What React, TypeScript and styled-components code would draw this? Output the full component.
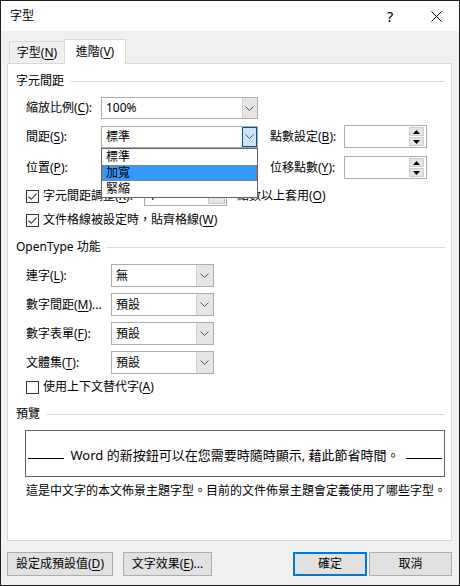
import React from 'react';
import styled, { createGlobalStyle } from 'styled-components';

const GlobalStyle = createGlobalStyle`
  html, body {
    margin: 0;
    padding: 0;
    background: #fff;
  }
  body {
    font-family: "Noto Sans", "Noto Sans CJK TC", sans-serif;
    font-size: 12px;
    line-height: 16px;
    color: #000;
  }
  * {
    box-sizing: border-box;
  }
  u {
    text-underline-offset: 2px;
  }
`;

const Chevron = () => (
  <svg width="9" height="5" viewBox="0 0 9 5">
    <path d="M0.5 0.5 L4.5 4.5 L8.5 0.5" stroke="#555" fill="none" />
  </svg>
);

const Tri = ({ up }: { up?: boolean }) => (
  <svg width="7" height="4" viewBox="0 0 7 4">
    <path d={up ? 'M0 4 L3.5 0 L7 4 Z' : 'M0 0 L3.5 4 L7 0 Z'} fill="#000" />
  </svg>
);

const Tick = () => (
  <svg width="11" height="11" viewBox="0 0 11 11">
    <path d="M1.5 5.5 L4.2 8.3 L9.6 2.6" fill="none" stroke="#333" strokeWidth="1.1" />
  </svg>
);

const CloseIcon = () => (
  <svg width="11" height="11" viewBox="0 0 11 11">
    <path d="M0.5 0.5 L10.5 10.5 M10.5 0.5 L0.5 10.5" stroke="#000" strokeWidth="1" />
  </svg>
);

export default function App() {
  return (
    <>
      <GlobalStyle />
      <Window>
        <TitleBar>
          <Title>字型</Title>
          <TitleButton>
            <HelpMark>?</HelpMark>
          </TitleButton>
          <TitleButton>
            <CloseIcon />
          </TitleButton>
        </TitleBar>

        <Body>
          <TabStrip>
            <Tab $w={56}>
              字型(<u>N</u>)
            </Tab>
            <Tab $active $w={62}>
              進階(<u>V</u>)
            </Tab>
          </TabStrip>

          <Panel>
            <SectionHeading $mt={9}>
              <span>字元間距</span>
              <Line />
            </SectionHeading>

            <Row $mt={8}>
              <Label $w={75}>
                縮放比例(<u>C</u>):
              </Label>
              <Combo $w={157} $h={22}>
                <ComboValue>100%</ComboValue>
                <ComboArrow>
                  <Chevron />
                </ComboArrow>
              </Combo>
            </Row>

            <Row $mt={6}>
              <Label $w={75}>
                間距(<u>S</u>):
              </Label>
              <Combo $w={157} $h={22}>
                <ComboValue>標準</ComboValue>
                <ComboArrow $active>
                  <Chevron />
                </ComboArrow>
                <DropList>
                  <DropItem>標準</DropItem>
                  <DropItem $selected>加寬</DropItem>
                  <DropItem>緊縮</DropItem>
                </DropList>
              </Combo>
              <Label $w={74} $ml={12}>
                點數設定(<u>B</u>):
              </Label>
              <Spin>
                <SpinField />
                <SpinButtons>
                  <SpinButton>
                    <Tri up />
                  </SpinButton>
                  <SpinButton>
                    <Tri />
                  </SpinButton>
                </SpinButtons>
              </Spin>
            </Row>

            <Row $mt={8}>
              <Label $w={75}>
                位置(<u>P</u>):
              </Label>
              <Combo $w={157} $h={22}>
                <ComboValue />
                <ComboArrow>
                  <Chevron />
                </ComboArrow>
              </Combo>
              <Label $w={74} $ml={12}>
                位移點數(<u>Y</u>):
              </Label>
              <Spin>
                <SpinField />
                <SpinButtons>
                  <SpinButton>
                    <Tri up />
                  </SpinButton>
                  <SpinButton>
                    <Tri />
                  </SpinButton>
                </SpinButtons>
              </Spin>
            </Row>

            <Row $mt={7}>
              <Box>
                <Tick />
              </Box>
              <CheckText $w={101}>
                字元間距調整(<u>K</u>):
              </CheckText>
              <Combo $w={83} $h={20}>
                <ComboValue>1</ComboValue>
                <SmallArrow>
                  <Tri />
                </SmallArrow>
              </Combo>
              <CheckText $ml={10}>
                點數以上套用(<u>O</u>)
              </CheckText>
            </Row>

            <Row $mt={4}>
              <Box>
                <Tick />
              </Box>
              <CheckText>
                文件格線被設定時，貼齊格線(<u>W</u>)
              </CheckText>
            </Row>

            <SectionHeading $mt={9}>
              <span>OpenType 功能</span>
              <Line />
            </SectionHeading>

            <Row $mt={9}>
              <Label $w={85}>
                連字(<u>L</u>):
              </Label>
              <Combo $w={103} $h={23}>
                <ComboValue>無</ComboValue>
                <ComboArrow $wide>
                  <Chevron />
                </ComboArrow>
              </Combo>
            </Row>
            <Row $mt={6}>
              <Label $w={85}>
                數字間距(<u>M</u>)...
              </Label>
              <Combo $w={103} $h={23}>
                <ComboValue>預設</ComboValue>
                <ComboArrow $wide>
                  <Chevron />
                </ComboArrow>
              </Combo>
            </Row>
            <Row $mt={6}>
              <Label $w={85}>
                數字表單(<u>F</u>):
              </Label>
              <Combo $w={103} $h={23}>
                <ComboValue>預設</ComboValue>
                <ComboArrow $wide>
                  <Chevron />
                </ComboArrow>
              </Combo>
            </Row>
            <Row $mt={6}>
              <Label $w={85}>
                文體集(<u>T</u>):
              </Label>
              <Combo $w={103} $h={23}>
                <ComboValue>預設</ComboValue>
                <ComboArrow $wide>
                  <Chevron />
                </ComboArrow>
              </Combo>
            </Row>

            <Row $mt={3}>
              <Box />
              <CheckText>
                使用上下文替代字(<u>A</u>)
              </CheckText>
            </Row>

            <SectionHeading $mt={9}>
              <span>預覽</span>
              <Line />
            </SectionHeading>

            <PreviewBox>
              <Rule />
              <PreviewText>Word 的新按鈕可以在您需要時隨時顯示, 藉此節省時間。</PreviewText>
              <Rule />
            </PreviewBox>

            <Note>這是中文字的本文佈景主題字型。目前的文件佈景主題會定義使用了哪些字型。</Note>
          </Panel>

          <Footer>
            <Button $w={106}>
              設定成預設值(<u>D</u>)
            </Button>
            <Button $w={89} $ml={10}>
              文字效果(<u>E</u>)...
            </Button>
            <Spacer />
            <Button $w={74} $primary>
              確定
            </Button>
            <Button $w={83} $ml={2}>
              取消
            </Button>
          </Footer>
        </Body>
      </Window>
    </>
  );
}

const Window = styled.div`
  display: flex;
  flex-direction: column;
  width: 460px;
  height: 586px;
  border: 1px solid #1f1f1f;
  background: #f0f0f0;
  overflow: hidden;
`;

const TitleBar = styled.div`
  display: flex;
  align-items: center;
  height: 30px;
  background: #fff;
`;

const Title = styled.div`
  flex: 1;
  padding-left: 9px;
  font-size: 12px;
`;

const TitleButton = styled.div`
  display: flex;
  align-items: center;
  justify-content: center;
  width: 46px;
  height: 30px;
`;

const HelpMark = styled.span`
  font-family: "Noto Sans", sans-serif;
  font-size: 15px;
  line-height: 18px;
`;

const Body = styled.div`
  display: flex;
  flex-direction: column;
  flex: 1;
  padding: 8px 7px 0 6px;
`;

const TabStrip = styled.div`
  display: flex;
  align-items: flex-end;
  height: 24px;
  padding-left: 2px;
`;

const Tab = styled.div<{ $active?: boolean; $w: number }>`
  position: relative;
  z-index: 1;
  display: flex;
  align-items: center;
  justify-content: center;
  width: ${({ $w }) => $w}px;
  height: ${({ $active }) => ($active ? 25 : 22)}px;
  margin-bottom: ${({ $active }) => ($active ? -1 : 0)}px;
  margin-left: ${({ $active }) => ($active ? -1 : 0)}px;
  padding-top: ${({ $active }) => ($active ? 0 : 1)}px;
  border: 1px solid #d9d9d9;
  border-bottom: none;
  background: ${({ $active }) => ($active ? '#fff' : '#f0f0f0')};
`;

const Panel = styled.div`
  display: flex;
  flex-direction: column;
  height: 478px;
  padding: 0 6px 0 8px;
  border: 1px solid #d9d9d9;
  background: #fff;
`;

const SectionHeading = styled.div<{ $mt: number }>`
  display: flex;
  align-items: center;
  gap: 6px;
  height: 16px;
  margin-top: ${({ $mt }) => $mt}px;
`;

const Line = styled.div`
  flex: 1;
  height: 1px;
  background: #dcdcdc;
`;

const Row = styled.div<{ $mt: number }>`
  display: flex;
  align-items: center;
  min-height: 20px;
  margin-top: ${({ $mt }) => $mt}px;
  padding-left: 10px;
`;

const Label = styled.div<{ $w: number; $ml?: number }>`
  flex: none;
  width: ${({ $w }) => $w}px;
  margin-left: ${({ $ml }) => $ml ?? 0}px;
  white-space: nowrap;
`;

const Combo = styled.div<{ $w: number; $h: number }>`
  position: relative;
  display: flex;
  flex: none;
  width: ${({ $w }) => $w}px;
  height: ${({ $h }) => $h}px;
  border: 1px solid #adadad;
  background: #fff;
`;

const ComboValue = styled.div`
  flex: 1;
  display: flex;
  align-items: center;
  padding-left: 4px;
`;

const ComboArrow = styled.div<{ $active?: boolean; $wide?: boolean }>`
  display: flex;
  align-items: center;
  justify-content: center;
  width: ${({ $wide }) => ($wide ? 17 : 15)}px;
  border: 1px solid ${({ $active }) => ($active ? '#005499' : '#e5e5e5')};
  border-left-color: ${({ $active }) => ($active ? '#005499' : '#d0d0d0')};
  background: ${({ $active }) => ($active ? '#cce4f7' : '#e5e5e5')};
`;

const SmallArrow = styled.div`
  display: flex;
  align-items: center;
  justify-content: center;
  width: 17px;
  margin: 1px;
  border: 1px solid #c6c6c6;
  background: #e6e6e6;
`;

const DropList = styled.div`
  position: absolute;
  top: 21px;
  left: -1px;
  right: -1px;
  z-index: 10;
  border: 1px solid #646464;
  background: #fff;
`;

const DropItem = styled.div<{ $selected?: boolean }>`
  height: 16px;
  padding-left: 3px;
  line-height: 14px;
  background: ${({ $selected }) => ($selected ? '#3399ff' : '#fff')};
  border: 1px ${({ $selected }) => ($selected ? 'dotted #c0722c' : 'solid transparent')};
`;

const Spin = styled.div`
  display: flex;
  flex: none;
  width: 83px;
  height: 23px;
  border: 1px solid #adadad;
  background: #fff;
`;

const SpinField = styled.div`
  flex: 1;
`;

const SpinButtons = styled.div`
  display: flex;
  flex-direction: column;
  gap: 1px;
  width: 15px;
  margin: 1px 2px 1px 0;
`;

const SpinButton = styled.div`
  flex: 1;
  display: flex;
  align-items: center;
  justify-content: center;
  border: 1px solid #cfcfcf;
  background: #e6e6e6;
`;

const Box = styled.div`
  display: flex;
  align-items: center;
  justify-content: center;
  flex: none;
  width: 13px;
  height: 13px;
  border: 1px solid #333;
  background: #fff;
`;

const CheckText = styled.div<{ $w?: number; $ml?: number }>`
  flex: none;
  width: ${({ $w }) => ($w ? `${$w}px` : 'auto')};
  margin-left: ${({ $ml }) => $ml ?? 4}px;
  white-space: nowrap;
`;

const PreviewBox = styled.div`
  display: flex;
  align-items: center;
  justify-content: center;
  gap: 6px;
  width: 420px;
  height: 47px;
  margin: 8px 0 0 9px;
  padding-top: 3px;
  border: 1px solid #646464;
`;

const Rule = styled.div`
  flex: none;
  width: 36px;
  height: 1px;
  margin-top: 6px;
  background: #000;
`;

const PreviewText = styled.div`
  font-size: 13px;
  white-space: nowrap;
`;

const Note = styled.div`
  margin-top: 6px;
  padding-left: 10px;
  white-space: nowrap;
`;

const Footer = styled.div`
  display: flex;
  align-items: center;
  margin-top: 11px;
`;

const Spacer = styled.div`
  flex: 1;
`;

const Button = styled.div<{ $w: number; $ml?: number; $primary?: boolean }>`
  display: flex;
  align-items: center;
  justify-content: center;
  width: ${({ $w }) => $w}px;
  height: 24px;
  margin-left: ${({ $ml }) => $ml ?? 0}px;
  border: ${({ $primary }) => ($primary ? '2px solid #0078d7' : '1px solid #adadad')};
  background: #e1e1e1;
  white-space: nowrap;
`;
